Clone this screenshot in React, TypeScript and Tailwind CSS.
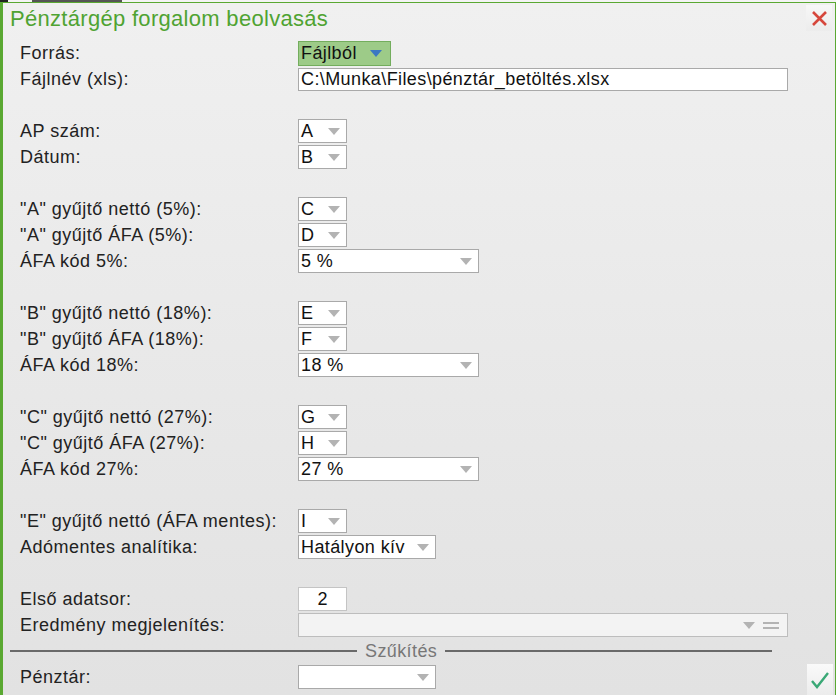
import React from 'react'

const font = { fontFamily: '"Liberation Sans", Arial, sans-serif' }

function Arrow({ color = '#b3b3b3' }: { color?: string }) {
    return (
        <svg width="12" height="7" viewBox="0 0 12 7" className="shrink-0">
            <path d="M0 0 L12 0 L6 7 Z" fill={color} />
        </svg>
    )
}

function Select({ value, w, disabled }: { value?: string; w: string; disabled?: boolean }) {
    return (
        <div className={`${w} h-[24px] border ${disabled ? 'bg-[#f3f3f3] border-[#bdbdbd]' : 'bg-white border-[#a9a9a9]'} flex items-center justify-between pl-[2px] pr-[6px] text-[18px] tracking-[0.4px] text-[#111] leading-none`}>
            <span>{value}</span>
            {disabled ? (
                <div className="flex items-center gap-[8px] pr-[2px]">
                    <Arrow />
                    <span className="flex flex-col gap-[3px]">
                        <span className="block w-[16px] h-[2px] bg-[#b3b3b3]" />
                        <span className="block w-[16px] h-[2px] bg-[#b3b3b3]" />
                    </span>
                </div>
            ) : (
                <Arrow />
            )}
        </div>
    )
}

function Row({ label, children }: { label: string; children: React.ReactNode }) {
    return (
        <div className="flex items-center h-[26px]">
            <div className="w-[278px] shrink-0 text-[18px] tracking-[0.5px] text-[#222]">{label}</div>
            {children}
        </div>
    )
}

const Gap = () => <div className="h-[26px]" />

export default function App() {
    return (
        <div className="w-[836px] h-[695px] overflow-hidden bg-[#f2f2f2] flex flex-col" style={font}>
            {/* background app strip */}
            <div className="h-[2px] flex shrink-0 bg-[#f4f4f4]">
                <div className="w-[8px] bg-[#222]" />
                <div className="w-[24px]" />
                <div className="w-[90px] bg-[#555]" />
            </div>

            <div className="flex-1 border-l-[3px] border-t border-r border-[#5aa832] bg-gradient-to-b from-[#f0f0f0] to-[#e2e2e2] flex flex-col">
                {/* Title */}
                <div className="h-[37px] flex items-start justify-between pl-[7px] pr-[3px]">
                    <h1 className="text-[22px] tracking-[0.3px] leading-none text-[#4fa332] pt-[5px]">Pénztárgép forgalom beolvasás</h1>
                    <div className="w-[26px] h-[26px] mt-[2px] flex items-center justify-center bg-gradient-to-b from-[#f7f7f7] to-[#ececec]">
                        <svg width="17" height="17" viewBox="0 0 17 17">
                            <path d="M2 2 L15 15 M15 2 L2 15" stroke="#d6473c" strokeWidth="2.6" />
                        </svg>
                    </div>
                </div>

                <div className="pl-[17px] flex flex-col">
                    <Row label="Forrás:">
                        <div className="w-[93px] h-[25px] bg-[#9dcb88] border border-[#73ad5d] flex items-center justify-between pl-[2px] pr-[8px] text-[18px] tracking-[0.4px] text-[#111]">
                            <span>Fájlból</span>
                            <Arrow color="#3b78c3" />
                        </div>
                    </Row>
                    <Row label="Fájlnév (xls):">
                        <div className="w-[490px] h-[23px] bg-white border border-[#a9a9a9] flex items-center pl-[2px] text-[18px] tracking-[0.4px] text-[#111]">
                            C:\Munka\Files\pénztár_betöltés.xlsx
                        </div>
                    </Row>
                    <Gap />
                    <Row label="AP szám:"><Select value="A" w="w-[49px]" /></Row>
                    <Row label="Dátum:"><Select value="B" w="w-[49px]" /></Row>
                    <Gap />
                    <Row label={'"A" gyűjtő nettó (5%):'}><Select value="C" w="w-[49px]" /></Row>
                    <Row label={'"A" gyűjtő ÁFA (5%):'}><Select value="D" w="w-[49px]" /></Row>
                    <Row label="ÁFA kód 5%:"><Select value="5 %" w="w-[181px]" /></Row>
                    <Gap />
                    <Row label={'"B" gyűjtő nettó (18%):'}><Select value="E" w="w-[49px]" /></Row>
                    <Row label={'"B" gyűjtő ÁFA (18%):'}><Select value="F" w="w-[49px]" /></Row>
                    <Row label="ÁFA kód 18%:"><Select value="18 %" w="w-[181px]" /></Row>
                    <Gap />
                    <Row label={'"C" gyűjtő nettó (27%):'}><Select value="G" w="w-[49px]" /></Row>
                    <Row label={'"C" gyűjtő ÁFA (27%):'}><Select value="H" w="w-[49px]" /></Row>
                    <Row label="ÁFA kód 27%:"><Select value="27 %" w="w-[181px]" /></Row>
                    <Gap />
                    <Row label={'"E" gyűjtő nettó (ÁFA mentes):'}><Select value="I" w="w-[49px]" /></Row>
                    <Row label="Adómentes analítika:"><Select value="Hatályon kív" w="w-[138px]" /></Row>
                    <Gap />
                    <Row label="Első adatsor:">
                        <div className="w-[49px] h-[24px] bg-white border border-[#c4c4c4] flex items-center justify-center text-[18px] text-[#111]">2</div>
                    </Row>
                    <Row label="Eredmény megjelenítés:"><Select w="w-[490px]" disabled /></Row>
                </div>

                {/* Separator */}
                <div className="h-[26px] flex items-center pl-[7px] pr-[63px] gap-[6px]">
                    <div className="w-[347px] h-[2px] bg-[#6a6a6a]" />
                    <span className="text-[18px] tracking-[0.4px] text-[#777] px-[2px]">Szűkítés</span>
                    <div className="flex-1 h-[2px] bg-[#6a6a6a]" />
                </div>

                <div className="pl-[17px] flex items-start justify-between pr-[2px]">
                    <Row label="Pénztár:"><Select w="w-[138px]" /></Row>
                    <div className="w-[26px] h-[31px] bg-gradient-to-b from-[#fafafa] to-[#ececec] flex items-center justify-center">
                        <svg width="20" height="18" viewBox="0 0 20 18">
                            <path d="M2 10 L7 16 L18 2" fill="none" stroke="#3aa876" strokeWidth="2.4" />
                        </svg>
                    </div>
                </div>
            </div>
        </div>
    )
}
